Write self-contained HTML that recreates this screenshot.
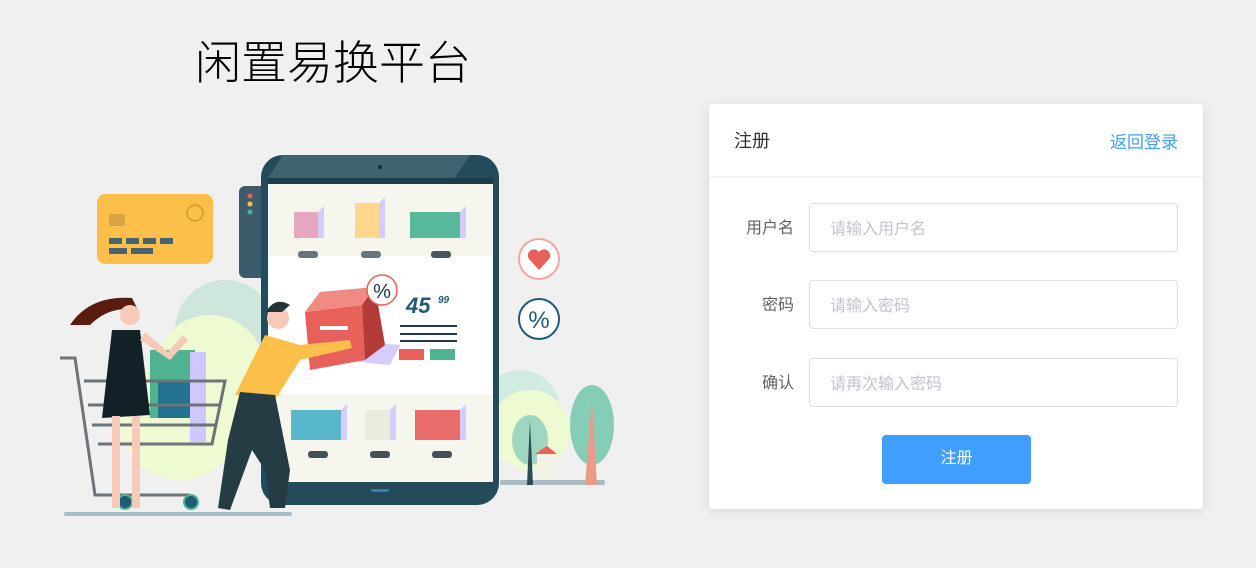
<!DOCTYPE html>
<html><head><meta charset="utf-8"><style>
*{margin:0;padding:0;box-sizing:border-box}
body{width:1256px;height:568px;background:#f0f0f0;font-family:"Liberation Sans","Noto Sans CJK SC",sans-serif;position:relative;overflow:hidden}
.title{position:absolute;left:195px;top:27px;font-size:46px;color:#000;letter-spacing:0px;font-weight:300}
.card{position:absolute;left:709px;top:104px;width:494px;height:405px;background:#fff;border-radius:4px;box-shadow:0 2px 12px rgba(0,0,0,.1)}
.hd{height:73px;border-bottom:1px solid #ebeef5;position:relative}
.hd .t{position:absolute;left:25px;top:23px;font-size:18px;color:#303133}
.hd .a{position:absolute;right:25px;top:24px;font-size:17px;color:#409eff}
.row{position:absolute;left:0;width:494px;height:49px}
.row label{position:absolute;right:409px;top:11px;font-size:16px;color:#606266}
.row .in{position:absolute;left:100px;top:0;width:369px;height:49px;border:1px solid #dcdfe6;border-radius:4px;font-size:16px;color:#c0c4cc;padding:11px 0 0 20px}
.btn{position:absolute;left:173px;top:331px;width:149px;height:49px;background:#409eff;border-radius:4px;color:#fff;font-size:16px;text-align:center;line-height:47px}
</style></head><body>
<div class="title">闲置易换平台</div>
<svg style="position:absolute;left:0;top:0" width="700" height="568">
<circle cx="225" cy="330" r="50" fill="#cfe6dc"/>
<circle cx="210" cy="370" r="55" fill="#eefad2"/>
<circle cx="180" cy="420" r="60" fill="#eefad2"/>
<circle cx="520" cy="410" r="40" fill="#d2ebe0"/>
<circle cx="530" cy="430" r="40" fill="#eefad2"/>
<rect x="500" y="480" width="105" height="5" rx="2" fill="#a9bdc4"/>
<ellipse cx="530" cy="440" rx="18" ry="25" fill="#9fd6c2"/>
<polygon points="530,420 533,485 527,485" fill="#2e4a55"/>
<ellipse cx="592" cy="425" rx="22" ry="40" fill="#86cdb8"/>
<polygon points="592,400 597,485 585,485" fill="#ec9a88"/>
<rect x="537" y="452" width="18" height="28" fill="#f3f0e6"/>
<polygon points="535,454 547,446 557,454" fill="#e8605a"/>
<rect x="97" y="194" width="116" height="70" rx="8" fill="#fcc04a"/>
<circle cx="195" cy="213" r="8" fill="none" stroke="#c89a32" stroke-width="1.5"/>
<rect x="109" y="214" width="16" height="12" rx="2" fill="#d8a444"/>
<g fill="#48626e"><rect x="109" y="238" width="13" height="6"/><rect x="126" y="238" width="13" height="6"/><rect x="143" y="238" width="13" height="6"/><rect x="160" y="238" width="13" height="6"/><rect x="109" y="248" width="18" height="6"/><rect x="131" y="248" width="22" height="6"/></g>
<rect x="239" y="186" width="30" height="92" rx="6" fill="#3d5c6b"/>
<circle cx="250" cy="196" r="2.5" fill="#e8605a"/><circle cx="250" cy="204" r="2.5" fill="#fcc04a"/><circle cx="250" cy="212" r="2.5" fill="#4db391"/>
<rect x="261" y="155" width="238" height="350" rx="22" fill="#234b5c"/>
<path d="M283 155 L470 155 L440 200 L268 200 L268 178 Z" fill="#4c6d7b" opacity=".7"/>
<rect x="268" y="178" width="225" height="304" fill="#f6f5ee"/>
<rect x="268" y="178" width="225" height="6" fill="#1f3c49"/>
<rect x="268" y="256" width="225" height="138" fill="#fff"/>
<circle cx="380" cy="167" r="2" fill="#1a2a30"/>
<rect x="371" y="489" width="18" height="3" rx="1.5" fill="#3b7ea0"/>
<rect x="294" y="212" width="24" height="26" fill="#e6a7c1"/><polygon points="318,212 324,206 324,238 318,238" fill="#d6ccff"/>
<rect x="355" y="203" width="24" height="35" fill="#fcd98a"/><polygon points="379,203 385,197 385,238 379,238" fill="#d6ccff"/>
<rect x="410" y="212" width="50" height="26" fill="#57b89c"/><polygon points="460,212 466,206 466,238 460,238" fill="#d6ccff"/>
<rect x="298" y="251" width="20" height="7" rx="3" fill="#68767c"/><rect x="361" y="251" width="20" height="7" rx="3" fill="#68767c"/><rect x="431" y="251" width="20" height="7" rx="3" fill="#4b565a"/>
<rect x="291" y="410" width="50" height="30" fill="#59b7cc"/><polygon points="341,410 347,404 347,440 341,440" fill="#d6ccff"/>
<rect x="365" y="410" width="25" height="30" fill="#ebeadf"/><polygon points="390,410 396,404 396,440 390,440" fill="#d6ccff"/>
<rect x="415" y="410" width="45" height="30" fill="#e86d6a"/><polygon points="460,410 466,404 466,440 460,440" fill="#d6ccff"/>
<rect x="308" y="451" width="20" height="7" rx="3" fill="#445156"/><rect x="370" y="451" width="20" height="7" rx="3" fill="#445156"/><rect x="432" y="451" width="20" height="7" rx="3" fill="#445156"/>
<polygon points="320,358 390,365 400,345 330,340" fill="#d6ccff"/>
<polygon points="305,312 362,305 365,360 310,370" fill="#e8605a"/>
<polygon points="305,312 320,292 375,287 362,305" fill="#f08a83"/>
<polygon points="362,305 375,287 385,345 365,360" fill="#b23b38"/>
<rect x="320" y="326" width="28" height="4" fill="#fff"/>
<circle cx="382" cy="290" r="15" fill="#fff" stroke="#e8605a" stroke-width="1.5"/>
<text x="382" y="298" text-anchor="middle" font-size="20" fill="#213a45" font-family="Liberation Sans">%</text>
<text x="406" y="313" font-size="22" font-weight="bold" font-style="italic" fill="#1d5b78" font-family="Liberation Sans">45</text>
<text x="438" y="303" font-size="10" font-weight="bold" font-style="italic" fill="#1d5b78" font-family="Liberation Sans">99</text>
<g fill="#213a45"><rect x="400" y="325" width="57" height="2"/><rect x="400" y="333" width="57" height="2"/><rect x="400" y="340" width="57" height="2"/></g>
<rect x="399" y="349" width="25" height="11" fill="#e8605a"/><rect x="430" y="349" width="25" height="11" fill="#4db391"/>
<circle cx="539" cy="259" r="20" fill="#fff" stroke="#f2a7a0" stroke-width="2"/>
<path d="M539 270 L529 259 A5 5 0 0 1 539 252 A5 5 0 0 1 549 259 Z" fill="#e8605a"/>
<circle cx="539" cy="319" r="20" fill="#fff" stroke="#1d5b78" stroke-width="2"/>
<text x="539" y="328" text-anchor="middle" font-size="24" fill="#1d5b78" font-family="Liberation Sans">%</text>
<path d="M265 335 L300 345 L350 340 L352 348 L300 360 L275 400 L235 395 Z" fill="#fcc04a"/>
<path d="M240 392 L275 395 L290 470 L285 508 L270 508 L265 470 L252 450 L230 510 L218 508 L228 440 Z" fill="#263c45"/>
<circle cx="278" cy="318" r="11" fill="#f6c9b8"/>
<path d="M266 312 Q275 296 290 305 L282 312 Z" fill="#26343a"/>
<rect x="64" y="512" width="228" height="4" rx="2" fill="#a9bdc4"/>
<rect x="150" y="350" width="45" height="68" fill="#4db391"/><rect x="158" y="380" width="38" height="38" fill="#23728f"/>
<rect x="190" y="352" width="16" height="90" fill="#cfc7ff"/>
<g fill="none" stroke="#6d7478" stroke-width="3"><path d="M60 358 L75 358 L95 495 L190 495"/><path d="M84 381 L225 381 L212 444 L98 444"/><path d="M88 405 L220 405"/><path d="M92 425 L215 425"/></g>
<circle cx="125" cy="502" r="7" fill="#1d5b78" stroke="#4db391" stroke-width="2"/><circle cx="191" cy="502" r="7" fill="#1d5b78" stroke="#4db391" stroke-width="2"/>
<path d="M70 325 Q90 295 132 298 L138 310 Q110 305 90 325 Z" fill="#5a1c10"/>
<circle cx="130" cy="315" r="10" fill="#f6c9b8"/>
<path d="M112 330 L140 330 L150 415 L102 418 Z" fill="#112127"/>
<path d="M140 340 L170 360 L188 340 L183 335 L168 352 L145 332 Z" fill="#f6c9b8"/>
<rect x="112" y="416" width="8" height="92" fill="#f6c9b8"/><rect x="132" y="416" width="8" height="92" fill="#f6c9b8"/>
</svg>
<div class="card">
<div class="hd"><span class="t">注册</span><span class="a">返回登录</span></div>
<div class="row" style="top:99px"><label>用户名</label><div class="in">请输入用户名</div></div>
<div class="row" style="top:176px"><label>密码</label><div class="in">请输入密码</div></div>
<div class="row" style="top:254px"><label>确认</label><div class="in">请再次输入密码</div></div>
<div class="btn">注册</div>
</div>
</body></html>
